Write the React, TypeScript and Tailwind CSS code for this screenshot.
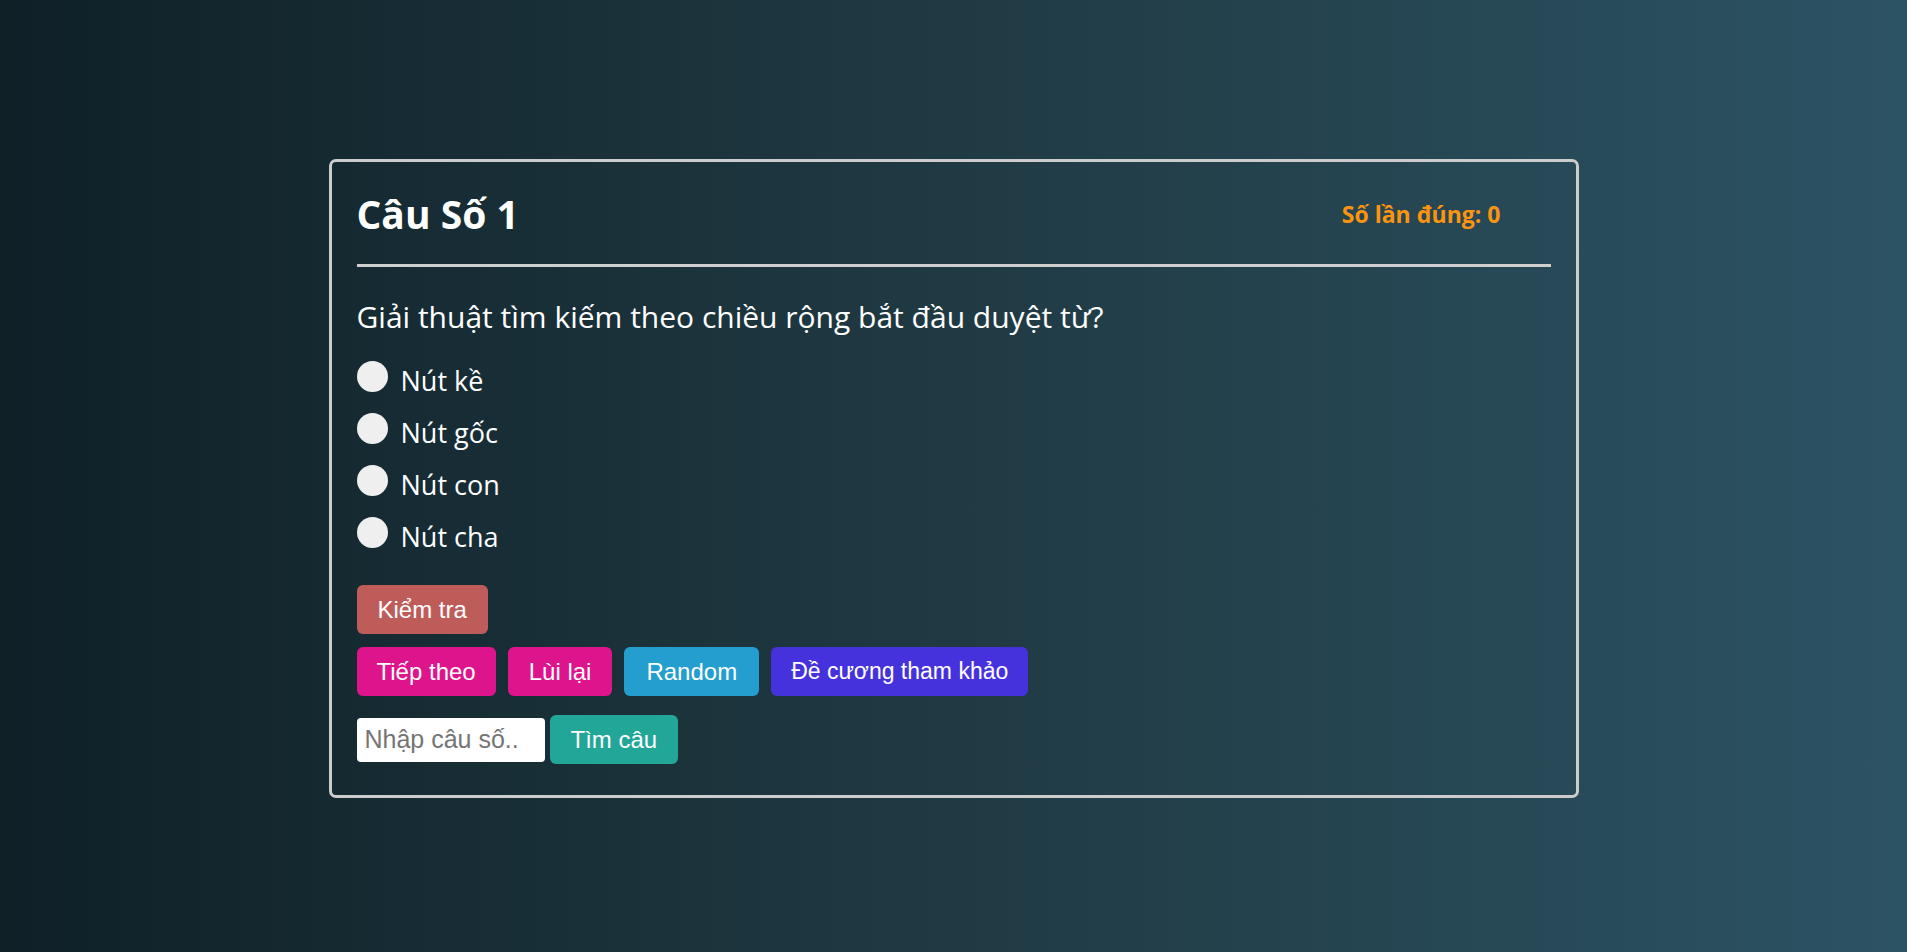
import React from "react";

const options = ["Nút kề", "Nút gốc", "Nút con", "Nút cha"];

export default function App() {
  return (
    <div className="min-h-screen w-full flex items-center justify-center pt-[5px] bg-[linear-gradient(to_right,#0f2027,#203a43,#2c5364)]">
      <div className="w-[1250px] border-[3px] border-[#cccccc] rounded-[7px] px-[25px] pt-[25px] pb-[31px] text-white font-['Open_Sans','Noto_Sans',sans-serif]">
        <div className="flex items-center justify-between pt-[3px] pb-[26px]">
          <h2 className="text-[39px] leading-[48px] font-bold text-white">Câu Số 1</h2>
          <div className="mr-[50px] text-[23px] leading-[28px] font-bold text-[#fd9410]">Số lần đúng: 0</div>
        </div>
        <div className="h-[3px] bg-[#cfcfcf]" />
        <p className="mt-[32px] text-[30px] leading-[36px] text-white">
          Giải thuật tìm kiếm theo chiều rộng bắt đầu duyệt từ?
        </p>
        <div className="mt-[26px] flex flex-col gap-[17px]">
          {options.map((o) => (
            <label key={o} className="flex items-start gap-[13px] cursor-pointer">
              <span className="w-[31px] h-[31px] rounded-full bg-[#efefef] shrink-0" />
              <span className="mt-[4px] text-[27px] leading-[31px] text-white">{o}</span>
            </label>
          ))}
        </div>
        <div className="mt-[33px] font-['Liberation_Sans',Arial,sans-serif]">
          <div className="flex">
            <button className="h-[49px] px-[21px] rounded-[6px] bg-[#be5c5a] text-white text-[24px] leading-none">
              Kiểm tra
            </button>
          </div>
          <div className="mt-[13px] flex gap-[12px]">
            <button className="h-[49px] px-[20px] rounded-[6px] bg-[#dd148b] text-white text-[24px] leading-none">
              Tiếp theo
            </button>
            <button className="h-[49px] px-[21px] rounded-[6px] bg-[#dd148b] text-white text-[24px] leading-none">
              Lùi lại
            </button>
            <button className="h-[49px] px-[22px] rounded-[6px] bg-[#239ecf] text-white text-[24px] leading-none">
              Random
            </button>
            <button className="h-[49px] px-[20px] rounded-[6px] bg-[#4632dc] text-white text-[23px] leading-none">
              Đề cương tham khảo
            </button>
          </div>
          <div className="mt-[19px] flex items-center gap-[5px]">
            <input
              type="text"
              placeholder="Nhập câu số.."
              className="w-[188px] h-[44px] rounded-[4px] bg-white px-[8px] text-[25px] text-black placeholder:text-[#757575] outline-none"
            />
            <button className="h-[49px] px-[21px] rounded-[6px] bg-[#21a698] text-white text-[24px] leading-none">
              Tìm câu
            </button>
          </div>
        </div>
      </div>
    </div>
  );
}
